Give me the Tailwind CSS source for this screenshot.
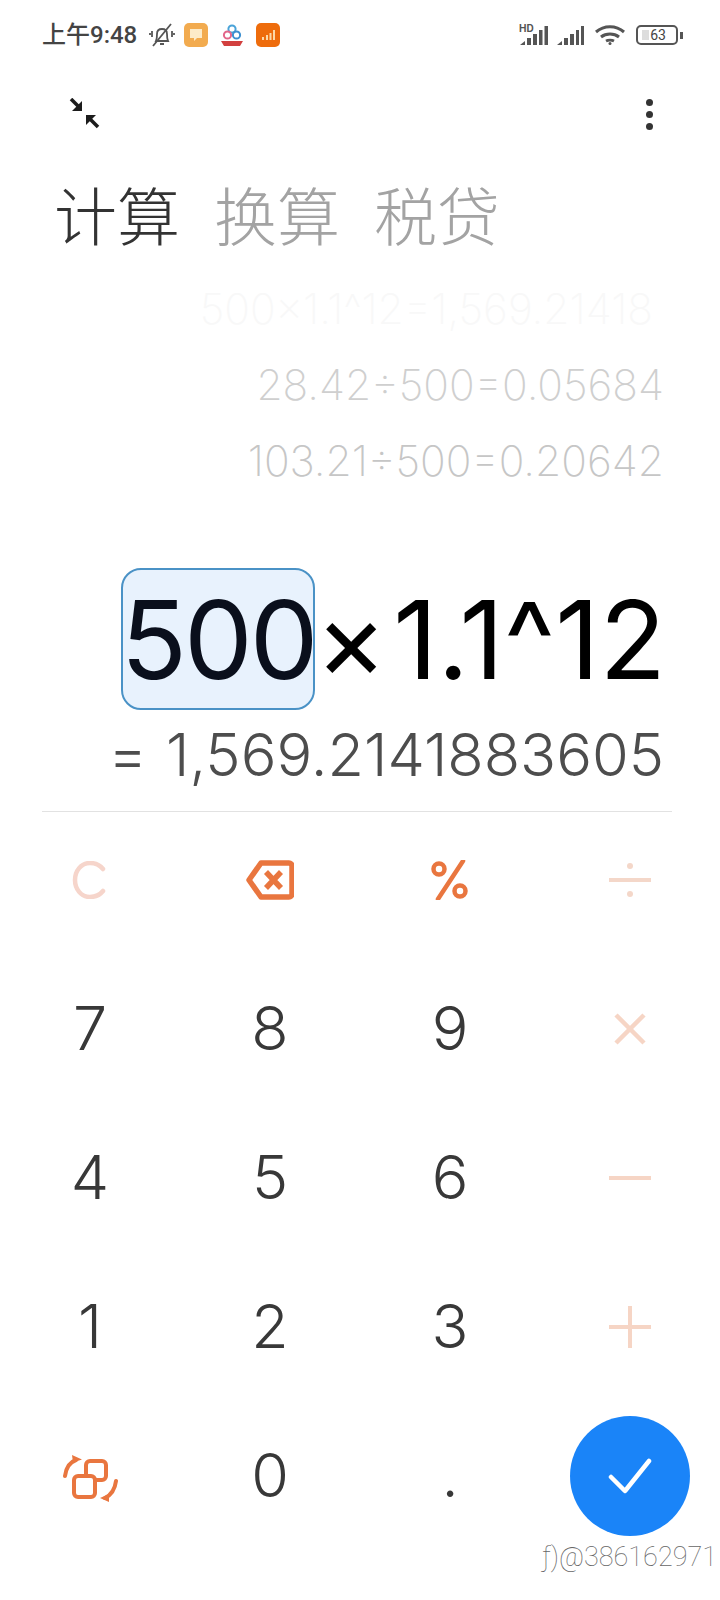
<!DOCTYPE html>
<html>
    <head>
        <meta charset="UTF-8">
        <title>计算器</title>
        <script src="https://cdn.jsdelivr.net/npm/@tailwindcss/browser@4"></script>
    </head>
    <body class="bg-white">
        <div class="relative w-[720px] h-[1600px] overflow-hidden bg-white font-['Inter','Noto_Sans_CJK_SC',sans-serif]">

            <!-- status bar -->
            <div class="h-[70px] pl-[42px] pr-[37px] flex items-center justify-between">
                <div class="flex items-center">
                    <span class="font-['Roboto','Noto_Sans_CJK_SC',sans-serif] text-[24px] font-medium text-[#444] w-[107px] whitespace-nowrap">上午9:48</span>
                    <svg class="w-[26px] h-[26px]" viewBox="0 0 26 26" fill="none" stroke="#555" stroke-width="1.800">
                        <path d="M7 19c1-2 1-4 1-7 0-3 2-5 5-5s5 2 5 5c0 3 0 5 1 7z"/>
                        <path d="M11 22h4M4 24 22 2M3 9v6M1 11v2M23 9v6M25 11v2"/>
                    </svg>
                    <div class="ml-[9px] w-[24px] h-[24px] rounded-[5px] bg-[#f2ab4f] flex items-center justify-center">
                        <svg class="w-[16px] h-[16px]" viewBox="0 0 16 16"><path d="M2 2h12v9H9l-3 3v-3H2z" fill="#fdebc8"/></svg>
                    </div>
                    <svg class="ml-[12px] w-[24px] h-[24px]" viewBox="0 0 24 24" fill="none">
                        <circle cx="12" cy="6" r="3.600" stroke="#4aa3d8" stroke-width="2"/>
                        <circle cx="7.500" cy="12" r="3.600" stroke="#e2668a" stroke-width="2"/>
                        <circle cx="16.500" cy="12" r="3.600" stroke="#3c8fd0" stroke-width="2"/>
                        <path d="M1 18h22l-3 5H4z" fill="#d2403f"/>
                    </svg>
                    <div class="ml-[12px] w-[24px] h-[24px] rounded-[5px] bg-[#ee6c0c] flex items-center justify-center">
                        <svg class="w-[16px] h-[16px]" viewBox="0 0 16 16" fill="#fcd9a8"><path d="M2 10h2v3H2zM6 8h2v5H6zM9.500 6h2v7h-2zM13 3h2v10h-2z"/></svg>
                    </div>
                </div>
                <div class="flex items-center">
                    <div class="relative w-[30px] h-[22px]">
                        <span class="absolute left-0 top-[-3px] text-[10px] font-bold text-[#555]">HD</span>
                        <svg class="w-[30px] h-[22px]" viewBox="0 0 30 22" fill="#555"><path d="M1 21l5-4v4zM8 14h4v7H8zM14 10h4v11h-4zM20 6h3.500v15H20zM25.500 2H29v19h-3.500z"/></svg>
                    </div>
                    <svg class="ml-[7px] w-[29px] h-[22px]" viewBox="0 0 29 22" fill="#555"><path d="M1 21l5-4v4zM8 14h4v7H8zM14 10h4v11h-4zM20 6h3v15h-3zM25 2h3v19h-3z"/></svg>
                    <svg class="ml-[10px] w-[30px] h-[22px]" viewBox="0 0 30 22" fill="none" stroke="#555" stroke-width="3">
                        <path d="M1 8c8-7 20-7 28 0M6 13c5-4 13-4 18 0M11 17c2-1 6-1 8 0"/>
                        <circle cx="15" cy="19.500" r="1.500" fill="#555" stroke="none"/>
                    </svg>
                    <div class="ml-[11px] w-[42px] h-[20px] rounded-[5px] border-2 border-[#555] relative flex items-center justify-center">
                        <div class="absolute left-[4px] top-[3px] bottom-[3px] w-[7px] bg-[#ddd]"></div>
                        <span class="relative font-['Roboto',sans-serif] text-[14px] leading-none text-[#444] pl-[2px]">63</span>
                    </div>
                    <div class="ml-[2px] w-[3px] h-[7px] bg-[#555]"></div>
                </div>
            </div>

            <!-- toolbar -->
            <div class="h-[88px] pl-[68px] pr-[67px] flex items-center justify-between">
                <svg class="w-[32px] h-[32px]" viewBox="0 0 32 32" fill="#1c1c1c" stroke="#1c1c1c" stroke-width="3.500">
                    <path d="M3 1l9 9" fill="none"/>
                    <path d="M14 3v10H4z" stroke="none"/>
                    <path d="M30 29l-9-9" fill="none"/>
                    <path d="M18 17h10L18 27z" stroke="none"/>
                </svg>
                <div class="flex flex-col gap-[5px]">
                    <div class="w-[7px] h-[7px] rounded-full bg-[#333]"></div>
                    <div class="w-[7px] h-[7px] rounded-full bg-[#333]"></div>
                    <div class="w-[7px] h-[7px] rounded-full bg-[#333]"></div>
                </div>
            </div>

            <!-- tabs -->
            <div class="mt-[5px] h-[98px] pl-[54px] flex items-center gap-[34px] font-['Noto_Sans_CJK_SC',sans-serif] text-[63px] font-light leading-none">
                <span class="text-[#333]">计算</span>
                <span class="text-[#a3a3a3]">换算</span>
                <span class="text-[#a3a3a3]">税贷</span>
            </div>

            <!-- history -->
            <div class="mt-[10px] pr-[56px] flex flex-col items-end text-[42.500px] font-extralight leading-[76px]">
                <div class="mr-[11px] text-[#f8f8f8]">500×1.1^12=1,569.21418</div>
                <div class="text-[#cfcfcf]">28.42÷500=0.05684</div>
                <div class="text-[#c6c6c6]">103.21÷500=0.20642</div>
            </div>

            <!-- expression -->
            <div class="mt-[65px] h-[150px] pr-[54px] flex items-center justify-end text-[109px] leading-none text-black">
                <span class="mr-[6px] h-[142px] w-[194px] flex items-center justify-center rounded-[20px] border-2 border-[#4a92c6] bg-[#e8f2fd] text-[#0a0f1c] tracking-[-3px]">500</span>
                <span class="whitespace-nowrap"><span class="-ml-[6px] mr-[6px]">×</span>1.1^12</span>
            </div>

            <!-- result -->
            <div class="mt-[11px] h-[60px] pr-[56px] flex items-center justify-end text-[59.500px] font-[350] leading-none text-[#4d4d4d]">
                <span class="mr-[19px]">=</span><span class="whitespace-nowrap">1,569.2141883605</span>
            </div>

            <div class="mt-[26px] ml-[42px] mr-[48px] h-px bg-[#e2e2e2]"></div>

            <!-- keypad -->
            <div class="-mt-[7px] grid grid-cols-4 auto-rows-[149px] text-[61px] font-[350] text-[#383838] leading-none">
                <div class="flex items-center justify-center">
                    <svg class="w-[36px] h-[38px]" viewBox="0 0 36 38" fill="none" stroke="#f6d5cb" stroke-width="4.500" stroke-linecap="round"><path d="M31 8C27 3 22 2 18 2 9 2 3 10 3 19s6 17 15 17c4 0 9-1 13-6"/></svg>
                </div>
                <div class="flex items-center justify-center">
                    <svg class="w-[48px] h-[40px]" viewBox="0 0 48 40" fill="none" stroke="#e9763f" stroke-width="5.500" stroke-linejoin="round"><path d="M15 3h28a3 3 0 0 1 3 3v28a3 3 0 0 1-3 3H15L3 20z"/><path d="M20 12l15 16M35 12 20 28"/></svg>
                </div>
                <div class="flex items-center justify-center">
                    <svg class="w-[38px] h-[40px]" viewBox="0 0 38 40" fill="none" stroke="#e9763f" stroke-width="4.500"><circle cx="8" cy="9" r="5.500"/><circle cx="29" cy="31" r="5.500"/><path d="M32 1 7 39" stroke-linecap="round"/></svg>
                </div>
                <div class="flex items-center justify-center">
                    <svg class="w-[42px] h-[38px]" viewBox="0 0 42 38" fill="#f4d7c9"><rect y="17" width="42" height="4"/><circle cx="21" cy="5" r="3"/><circle cx="21" cy="33" r="3"/></svg>
                </div>

                <div class="flex items-center justify-center">7</div>
                <div class="flex items-center justify-center">8</div>
                <div class="flex items-center justify-center">9</div>
                <div class="flex items-center justify-center">
                    <svg class="w-[34px] h-[34px]" viewBox="0 0 34 34" stroke="#f6d5c5" stroke-width="4.500"><path d="M3 3l28 28M31 3 3 31"/></svg>
                </div>

                <div class="flex items-center justify-center">4</div>
                <div class="flex items-center justify-center">5</div>
                <div class="flex items-center justify-center">6</div>
                <div class="flex items-center justify-center">
                    <div class="w-[42px] h-[4px] bg-[#f6d5c5]"></div>
                </div>

                <div class="flex items-center justify-center">1</div>
                <div class="flex items-center justify-center">2</div>
                <div class="flex items-center justify-center">3</div>
                <div class="flex items-center justify-center">
                    <svg class="w-[42px] h-[42px]" viewBox="0 0 42 42" fill="#f6d5c5"><path d="M0 19h42v4H0zM19 0h4v42h-4z"/></svg>
                </div>

                <div class="flex items-center justify-center">
                    <svg class="w-[56px] h-[56px]" viewBox="0 0 56 56" fill="none" stroke="#e9763f" stroke-width="4">
                        <rect x="24" y="13" width="20" height="19" rx="4"/>
                        <rect x="12" y="28" width="21" height="21" rx="4" fill="white"/>
                        <path d="M3 28C4 20 8 14 14 12M54 33C53 41 49 47 43 50" stroke-linecap="round"/>
                        <path d="M10 7l10 4.500-9 3zM38 50l9-4v8z" fill="#e9763f" stroke="none"/>
                    </svg>
                </div>
                <div class="flex items-center justify-center">0</div>
                <div class="flex items-center justify-center">.</div>
                <div class="flex items-center justify-center">
                    <div class="w-[120px] h-[120px] rounded-full bg-[#1a84f8] flex items-center justify-center">
                        <svg class="w-[44px] h-[36px]" viewBox="0 0 44 36" fill="none" stroke="#fff" stroke-width="4.500" stroke-linecap="round" stroke-linejoin="round"><path d="M3 19l14 14L41 3"/></svg>
                    </div>
                </div>
            </div>

            <div class="absolute right-[3px] bottom-[29px] font-['Roboto',sans-serif] text-[27px] leading-none font-thin text-[#666]">ƒ)@386162971</div>
        </div>
    </body>
</html>
